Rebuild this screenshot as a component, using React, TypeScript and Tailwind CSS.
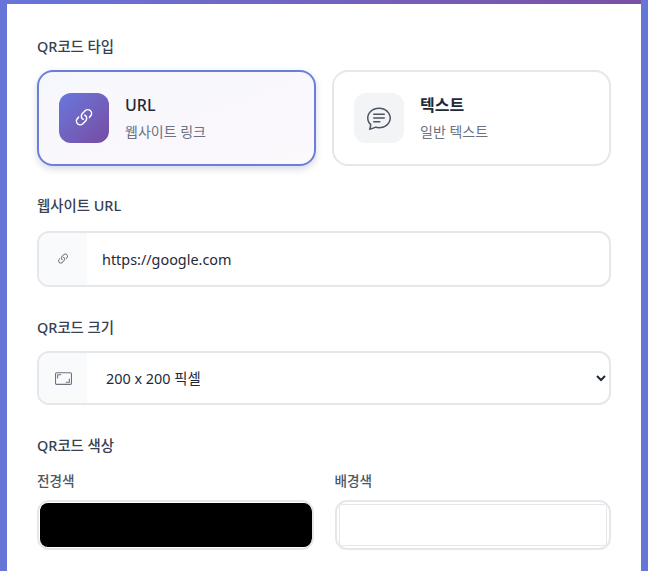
import { BsLink45Deg, BsChatText, BsAspectRatio } from "react-icons/bs";

export default function App() {
  return (
    <div className="h-[571px] overflow-hidden bg-[#6775d9] px-[7px] [font-family:'Noto_Sans','Noto_Sans_CJK_KR',sans-serif]">
      <div className="h-full overflow-hidden bg-white">
        <div className="h-1 bg-gradient-to-r from-[#6775d9] to-[#7a50a6]" />
        <div className="px-[30px] pt-[33px]">
          <h3 className="mb-[14px] text-[14.4px] leading-[19px] font-medium text-[#374151]">QR코드 타입</h3>
          <div className="grid grid-cols-2 gap-4">
            <div className="flex h-24 items-center gap-4 rounded-2xl border-2 border-[#6a7fdc] bg-gradient-to-br from-[#f6f7fd] to-[#fcf8fc] px-5 shadow-[0_3px_7px_rgba(70,80,140,0.22)]">
              <div className="flex h-[50px] w-[50px] items-center justify-center rounded-xl bg-gradient-to-br from-[#6678dd] to-[#764ba2] text-white">
                <BsLink45Deg className="h-[24px] w-[24px]" />
              </div>
              <div>
                <div className="mb-[7px] text-[16px] leading-[20px] font-medium text-[#1f2937]">URL</div>
                <div className="text-[14px] leading-[19px] text-[#6b7280]">웹사이트 링크</div>
              </div>
            </div>
            <div className="flex h-24 items-center gap-4 rounded-2xl border-2 border-[#e5e7eb] bg-white px-5">
              <div className="flex h-[50px] w-[50px] items-center justify-center rounded-xl bg-[#f3f4f6] text-[#4b5563]">
                <BsChatText className="h-[24px] w-[24px]" />
              </div>
              <div>
                <div className="mb-[7px] text-[16px] leading-[20px] font-semibold text-[#1f2937]">텍스트</div>
                <div className="text-[14px] leading-[19px] text-[#6b7280]">일반 텍스트</div>
              </div>
            </div>
          </div>

          <label className="mt-[30px] mb-4 block text-[14.4px] leading-[19px] font-medium text-[#374151]">웹사이트 URL</label>
          <div className="flex h-14 overflow-hidden rounded-xl border-2 border-[#e5e7eb] bg-white">
            <div className="flex w-[48px] items-center justify-center bg-[#f8fafc] text-[#6b7280]">
              <BsLink45Deg className="h-[14px] w-[14px]" />
            </div>
            <input
              readOnly
              value="https://google.com"
              className="min-w-0 flex-1 bg-transparent pt-px pl-[15px] text-[14.4px] text-[#1f2937] outline-none"
            />
          </div>

          <label className="mt-[31px] mb-[14px] block text-[14.4px] leading-[19px] font-medium text-[#374151]">QR코드 크기</label>
          <div className="flex h-[54px] overflow-hidden rounded-xl border-2 border-[#e5e7eb] bg-white">
            <div className="flex w-[48px] items-center justify-center bg-[#f8fafc] text-[#6b7280]">
              <BsAspectRatio className="h-[17px] w-[17px]" />
            </div>
            <select className="min-w-0 flex-1 bg-transparent pl-[15px] text-[14.4px] text-[#1f2937] outline-none">
              <option>200 x 200 픽셀</option>
            </select>
          </div>

          <h3 className="mt-[31px] mb-[17px] text-[14.4px] leading-[19px] font-medium text-[#374151]">QR코드 색상</h3>
          <div className="grid grid-cols-2 gap-[21px]">
            <div>
              <label className="mb-[10px] block text-[13.6px] leading-[18px] font-medium text-[#4b5563]">전경색</label>
              <input
                type="color"
                readOnly
                value="#000000"
                className="block h-[50px] w-full rounded-xl border-2 border-[#e5e7eb] bg-white p-px pr-0 [&::-webkit-color-swatch]:rounded-[8px] [&::-webkit-color-swatch]:border-0 [&::-webkit-color-swatch-wrapper]:p-0"
              />
            </div>
            <div>
              <label className="mb-[10px] block text-[13.6px] leading-[18px] font-medium text-[#4b5563]">배경색</label>
              <input
                type="color"
                readOnly
                value="#ffffff"
                className="block h-[50px] w-full rounded-xl border-2 border-[#e5e7eb] bg-white p-[2px] [&::-webkit-color-swatch]:rounded-[3px] [&::-webkit-color-swatch]:border [&::-webkit-color-swatch]:border-[#e5e7eb] [&::-webkit-color-swatch-wrapper]:p-0"
              />
            </div>
          </div>
        </div>
      </div>
    </div>
  );
}
